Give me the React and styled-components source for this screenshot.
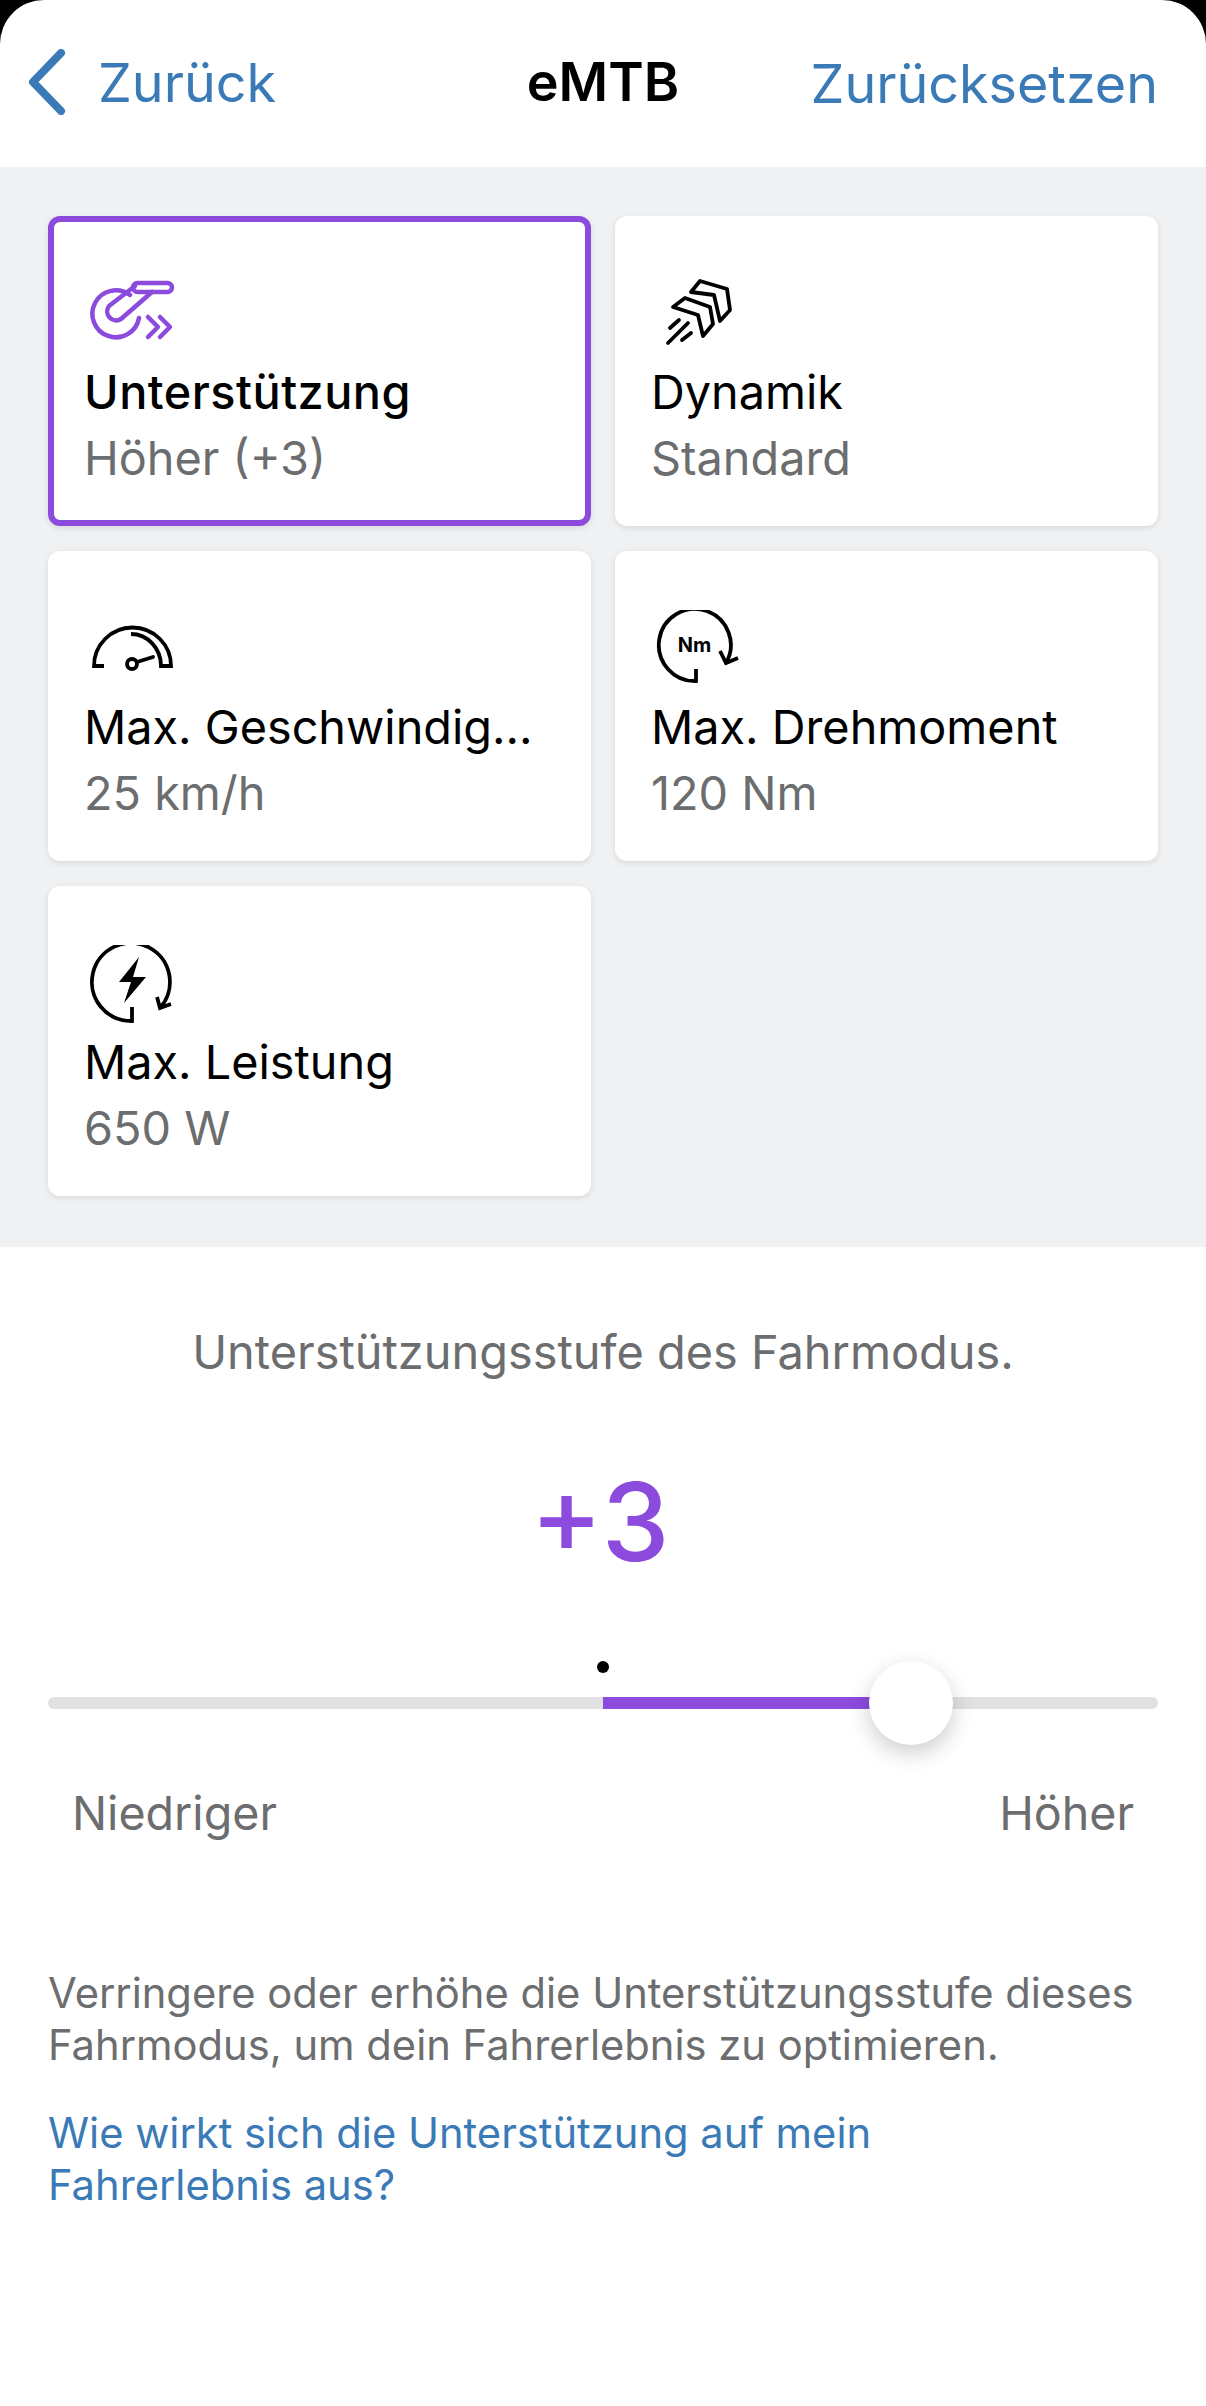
import React from 'react';
import styled, {createGlobalStyle} from 'styled-components';

const PURPLE = '#8c4bdc'
const BLUE = '#3a7ab6'
const GREY_TEXT = '#6c6d6e'

const GlobalStyle = createGlobalStyle`
  html, body {
    margin: 0;
    padding: 0;
    background: #000;
  }
  * {
    box-sizing: border-box;
  }
`

const Page = styled.div`
  width: 1206px;
  height: 2406px;
  background: #fff;
  border-radius: 44px 44px 0 0;
  overflow: hidden;
  font-family: Inter, "Liberation Sans", sans-serif;
`

const Header = styled.header`
  height: 167px;
  padding: 50px 48px 0;
  display: grid;
  grid-template-columns: 1fr auto 1fr;
  align-items: start;
  font-size: 53.8px;
`

const BackLink = styled.div`
  display: flex;
  align-items: center;
  gap: 32px;
  height: 64px;
  margin-left: -20px;
  color: ${BLUE};
`

const Title = styled.div`
  height: 64px;
  line-height: 64px;
  font-weight: 600;
  color: #000;
`

const ResetLink = styled.div`
  height: 64px;
  line-height: 68px;
  text-align: right;
  color: ${BLUE};
`

const CardsArea = styled.section`
  height: 1080px;
  padding: 49px 48px 0;
  background: #eff1f3;
  display: grid;
  grid-template-columns: 543px 543px;
  grid-auto-rows: 310px;
  gap: 25px 24px;
`

const Card = styled.div`
  background: #fff;
  border-radius: 12px;
  border: 6px solid ${p => (p.$active ? PURPLE : 'transparent')};
  box-shadow: 0 2px 6px rgba(0, 0, 0, 0.1);
  padding: 53px 16px 0 30px;
`

const IconSlot = styled.div`
  height: 84px;
  color: ${p => (p.$active ? PURPLE : '#000')};

  svg {
    display: block;
    margin-left: 4px;
  }
`

const CardTitle = styled.div`
  font-size: 46.8px;
  line-height: 66px;
  font-weight: ${p => (p.$active ? 500 : 400)};
  letter-spacing: ${p => (p.$active ? '0.5px' : '0')};
  color: #000;
  white-space: nowrap;
`

const CardValue = styled.div`
  font-size: 46.8px;
  line-height: 66px;
  color: ${GREY_TEXT};
  white-space: nowrap;
`

const Caption = styled.p`
  margin: 0;
  padding-top: 74px;
  text-align: center;
  font-size: 46.9px;
  line-height: 62px;
  color: ${GREY_TEXT};
`

const BigValue = styled.div`
  margin-top: 77px;
  padding-right: 6px;
  text-align: center;
  font-size: 108px;
  line-height: 124px;
  font-weight: 500;
  color: ${PURPLE};
`

const SliderWrap = styled.div`
  position: relative;
  margin: 113px 48px 0;
  height: 12px;
  background: #dfe1e2;
  border-radius: 6px;
`

const SliderFill = styled.div`
  position: absolute;
  top: 0;
  bottom: 0;
  background: ${PURPLE};
`

const ZeroDot = styled.span`
  position: absolute;
  left: 50%;
  top: -36px;
  width: 12px;
  height: 12px;
  margin-left: -6px;
  border-radius: 50%;
  background: #000;
`

const Thumb = styled.span`
  position: absolute;
  top: 50%;
  width: 84px;
  height: 84px;
  margin: -42px 0 0 -42px;
  border-radius: 50%;
  background: #fff;
  box-shadow: 0 8px 22px rgba(0, 0, 0, 0.2);
`

const ScaleLabels = styled.div`
  display: flex;
  justify-content: space-between;
  margin-top: 73px;
  padding: 0 72px;
  font-size: 46.6px;
  line-height: 62px;
  color: ${GREY_TEXT};
`

const HelpBlock = styled.div`
  padding: 0 48px;
  margin-top: 123px;
  font-size: 41.7px;
  line-height: 52px;
`

const HelpText = styled.p`
  margin: 0;
  color: ${GREY_TEXT};
`

const HelpLink = styled.p`
  margin: 36px 0 0;
  max-width: 900px;
  color: ${BLUE};
`

const ChevronIcon = () => (
	<svg width="38" height="66" viewBox="0 0 38 66" fill="none" stroke="currentColor" strokeWidth="8" strokeLinecap="round" strokeLinejoin="round">
		<path d="M33 4 L5 33 L33 62"/>
	</svg>
)

const AssistIcon = () => (
	<svg width="90" height="70" viewBox="0 0 90 70" fill="none" stroke="currentColor" strokeWidth="4.5" strokeLinecap="round" strokeLinejoin="round">
		<path d="M42 20 A23.5 23.5 0 1 0 51 43"/>
		<path d="M47 11 L21 31 A9 9 0 0 0 33 44 L64 17"/>
		<rect x="45" y="8" width="39" height="9" rx="4.5"/>
		<path d="M60 42 L70 52 L60 62"/>
		<path d="M72 42 L82 52 L72 62"/>
	</svg>
)

const DynamicsIcon = () => (
	<svg width="90" height="80" viewBox="5 10 90 80" fill="none" stroke="currentColor" strokeWidth="3.8" strokeLinecap="round" strokeLinejoin="round">
		<path d="M50 16 L77 24 L80 45 L70 56 L64 30 L41 27 Z"/>
		<path d="M23 42 L35 33 L60 42 L63 59 L53 71 L48 50 Z"/>
		<path d="M20 63 L29 55 M18 78 L38 58 M32 75 L41 68"/>
	</svg>
)

const SpeedIcon = () => (
	<svg width="90" height="70" viewBox="0 -10 90 70" fill="none" stroke="currentColor" strokeWidth="3.8">
		<path d="M16 46 H6 A38.5 38.5 0 0 1 83 46 H73 A30 32 0 0 0 43 14"/>
		<circle cx="44" cy="44" r="5"/>
		<path d="M49 42 L65 37" strokeLinecap="round"/>
	</svg>
)

const TorqueIcon = () => (
	<svg width="90" height="80" viewBox="0 0 90 80" fill="none" stroke="currentColor" strokeWidth="3.8">
		<path d="M41 59 V71 A36 36 0 1 1 71 53"/>
		<path d="M65 41 L71 53 L83 48"/>
		<text x="39.5" y="42" textAnchor="middle" fontSize="20" fontWeight="700" fill="currentColor" stroke="none">Nm</text>
	</svg>
)

const PowerIcon = () => (
	<svg width="90" height="84" viewBox="0 0 90 84" fill="none" stroke="currentColor" strokeWidth="3.8">
		<path d="M44 62 V76 A39 39 0 1 1 72 63"/>
		<path d="M69 52 L72 63 L83 59"/>
		<path d="M51 12 L31 37 H43 L36 58 L58 32 H45 Z" fill="currentColor" stroke="none"/>
	</svg>
)

const cards = [
	{id: 'assist', icon: AssistIcon, title: 'Unterstützung', value: 'Höher (+3)', active: true},
	{id: 'dynamics', icon: DynamicsIcon, title: 'Dynamik', value: 'Standard'},
	{id: 'speed', icon: SpeedIcon, title: 'Max. Geschwindig...', value: '25 km/h'},
	{id: 'torque', icon: TorqueIcon, title: 'Max. Drehmoment', value: '120 Nm'},
	{id: 'power', icon: PowerIcon, title: 'Max. Leistung', value: '650 W'},
]

const sliderPos = 77.75

const App = () => {
	return (
		<Page>
			<GlobalStyle/>
			<Header>
				<BackLink><ChevronIcon/>Zurück</BackLink>
				<Title>eMTB</Title>
				<ResetLink>Zurücksetzen</ResetLink>
			</Header>
			<CardsArea>
				{cards.map(({id, icon: Icon, title, value, active}) => (
					<Card key={id} $active={active}>
						<IconSlot $active={active}><Icon/></IconSlot>
						<CardTitle $active={active}>{title}</CardTitle>
						<CardValue>{value}</CardValue>
					</Card>
				))}
			</CardsArea>
			<Caption>Unterstützungsstufe des Fahrmodus.</Caption>
			<BigValue>+3</BigValue>
			<SliderWrap>
				<SliderFill style={{left: '50%', width: `${sliderPos - 50}%`}}/>
				<ZeroDot/>
				<Thumb style={{left: `${sliderPos}%`}}/>
			</SliderWrap>
			<ScaleLabels>
				<span>Niedriger</span>
				<span>Höher</span>
			</ScaleLabels>
			<HelpBlock>
				<HelpText>Verringere oder erhöhe die Unterstützungsstufe dieses Fahrmodus, um dein Fahrerlebnis zu optimieren.</HelpText>
				<HelpLink>Wie wirkt sich die Unterstützung auf mein Fahrerlebnis aus?</HelpLink>
			</HelpBlock>
		</Page>
	);
};

export default App;
